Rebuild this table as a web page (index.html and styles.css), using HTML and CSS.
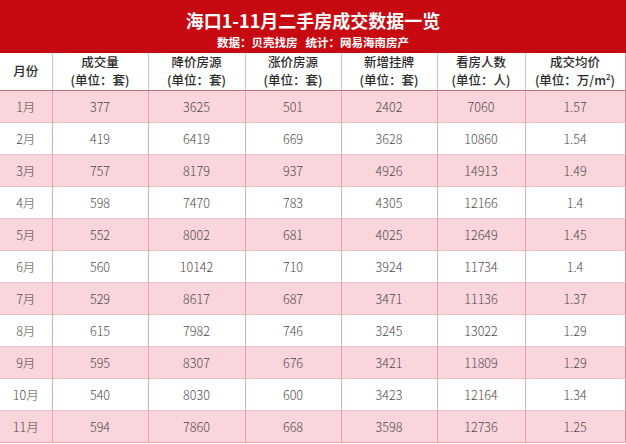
FILE: index.html
```html
<!DOCTYPE html>
<html lang="zh">
<head>
<meta charset="utf-8">
<link rel="stylesheet" href="styles.css">
</head>
<body>
<div class="page">
  <header class="banner">
    <h1 class="title">海口1-11月二手房成交数据一览</h1>
    <p class="sub">数据：贝壳找房&nbsp;&nbsp;&nbsp;统计：网易海南房产</p>
  </header>
  <table class="grid">
    <colgroup>
      <col class="c1"><col class="c2"><col class="c3"><col class="c4"><col class="c5"><col class="c6"><col class="c7">
    </colgroup>
    <thead>
      <tr>
        <th>月份</th>
        <th><span class="ln">成交量</span><span class="ln">(单位：套)</span></th>
        <th><span class="ln">降价房源</span><span class="ln">(单位：套)</span></th>
        <th><span class="ln">涨价房源</span><span class="ln">(单位：套)</span></th>
        <th><span class="ln">新增挂牌</span><span class="ln">(单位：套)</span></th>
        <th><span class="ln">看房人数</span><span class="ln">(单位：人)</span></th>
        <th><span class="ln">成交均价</span><span class="ln">(单位：万/m<sup>2</sup>)</span></th>
      </tr>
    </thead>
    <tbody>
      <tr class="pink"><td>1月</td><td>377</td><td>3625</td><td>501</td><td>2402</td><td>7060</td><td>1.57</td></tr>
      <tr><td>2月</td><td>419</td><td>6419</td><td>669</td><td>3628</td><td>10860</td><td>1.54</td></tr>
      <tr class="pink"><td>3月</td><td>757</td><td>8179</td><td>937</td><td>4926</td><td>14913</td><td>1.49</td></tr>
      <tr><td>4月</td><td>598</td><td>7470</td><td>783</td><td>4305</td><td>12166</td><td>1.4</td></tr>
      <tr class="pink"><td>5月</td><td>552</td><td>8002</td><td>681</td><td>4025</td><td>12649</td><td>1.45</td></tr>
      <tr><td>6月</td><td>560</td><td>10142</td><td>710</td><td>3924</td><td>11734</td><td>1.4</td></tr>
      <tr class="pink"><td>7月</td><td>529</td><td>8617</td><td>687</td><td>3471</td><td>11136</td><td>1.37</td></tr>
      <tr><td>8月</td><td>615</td><td>7982</td><td>746</td><td>3245</td><td>13022</td><td>1.29</td></tr>
      <tr class="pink"><td>9月</td><td>595</td><td>8307</td><td>676</td><td>3421</td><td>11809</td><td>1.29</td></tr>
      <tr><td>10月</td><td>540</td><td>8030</td><td>600</td><td>3423</td><td>12164</td><td>1.34</td></tr>
      <tr class="pink"><td>11月</td><td>594</td><td>7860</td><td>668</td><td>3598</td><td>12736</td><td>1.25</td></tr>
    </tbody>
  </table>
</div>
</body>
</html>
```

FILE: styles.css
```css
* { box-sizing: border-box; }
html, body { margin: 0; padding: 0; background: #ffffff; }
body { font-family: "Noto Sans CJK SC", "Noto Sans", sans-serif; }
.page { width: 626px; height: 444px; overflow: hidden; }
.banner {
  height: 53px;
  background: #c70a12;
  color: #ffffff;
  text-align: center;
  padding-top: 8px;
}
.title {
  margin: 0;
  font-size: 18px;
  line-height: 24px;
  font-weight: 700;
}
.sub {
  margin: 2px 0 0;
  font-size: 11.5px;
  line-height: 16px;
  font-weight: 700;
}
.grid {
  width: 625px;
  border-collapse: collapse;
  table-layout: fixed;
  border-right: 1px solid #d88c98;
  border-bottom: 1px solid #e3a8b1;
}
.c1 { width: 52px; } .c2 { width: 96px; } .c3 { width: 97px; }
.c4 { width: 96px; } .c5 { width: 96px; } .c6 { width: 88px; } .c7 { width: 100px; }
.grid th {
  height: 37px;
  padding: 0;
  font-size: 12.5px;
  line-height: 18px;
  font-weight: 500;
  color: #2a2a2a;
  border-left: 1px solid #e6b7be;
  border-bottom: 1px solid #d46c7b;
  text-align: center;
  vertical-align: middle;
}
.grid th .ln { display: block; height: 18px; }
.grid th:first-child, .grid td:first-child { border-left: none; }
.grid th sup { font-size: 8px; line-height: 0; vertical-align: 5px; }
.grid td {
  height: 32px;
  padding: 0;
  text-align: center;
  font-size: 12.5px;
  font-weight: 300;
  color: #4a4a4a;
  border-left: 1px solid #e3a8b1;
  border-top: 1px solid #ecc0c7;
}
.grid tr.pink td { background: #fbd5dc; }
```
